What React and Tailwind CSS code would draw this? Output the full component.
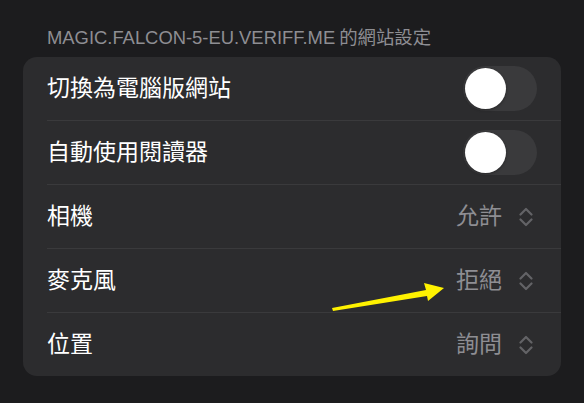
import React from "react";

const font = {
  fontFamily: '"Liberation Sans", "Noto Sans CJK TC", sans-serif',
};

const Toggle = () => (
  <div className="w-[74px] h-[45px] rounded-full bg-[#3a3a3c] p-[2px] flex items-center">
    <div className="w-[41px] h-[41px] rounded-full bg-white shadow-[0_1px_3px_rgba(0,0,0,0.35)]" />
  </div>
);

const Chevrons = () => (
  <svg width="14" height="22" viewBox="0 0 14 22" fill="none">
    <polyline points="1.5,8.5 7,3 12.5,8.5" stroke="#636366" strokeWidth="2.2" strokeLinecap="round" strokeLinejoin="round" />
    <polyline points="1.5,13.5 7,19 12.5,13.5" stroke="#636366" strokeWidth="2.2" strokeLinecap="round" strokeLinejoin="round" />
  </svg>
);

const rows = [
  { label: "切換為電腦版網站", toggle: true },
  { label: "自動使用閱讀器", toggle: true },
  { label: "相機", value: "允許" },
  { label: "麥克風", value: "拒絕" },
  { label: "位置", value: "詢問" },
];

export default function App() {
  return (
    <div className="relative w-[584px] h-[403px] bg-[#1c1c1e] overflow-hidden" style={font}>
      <div className="pl-[47px] pt-[27px] text-[18.4px] leading-[22px] text-[#8e8e93]">
        MAGIC.FALCON-5-EU.VERIFF.ME<span className="ml-[4px]">的網站設定</span>
      </div>
      <div className="mx-[23px] mt-[8px] bg-[#2c2c2e] rounded-[14px] overflow-hidden">
        {rows.map((row, i) => (
          <div key={row.label} className="pl-[24px]">
            <div
              className={`flex items-center justify-between ${
                i < rows.length - 1 ? "h-[64px] border-b border-[#3a3a3c]" : "h-[63px]"
              } ${row.toggle ? "pr-[24px]" : "pr-[28px]"}`}
            >
              <span className="text-[23px] text-white">{row.label}</span>
              {row.toggle ? (
                <Toggle />
              ) : (
                <div className="flex items-center gap-[17px]">
                  <span className="text-[23px] text-[#8e8e93]">{row.value}</span>
                  <Chevrons />
                </div>
              )}
            </div>
          </div>
        ))}
      </div>

      {/* yellow annotation arrow */}
      <svg className="absolute left-0 top-0 pointer-events-none" width="584" height="403" viewBox="0 0 584 403">
        <polygon
          points="332,308 426,290 424,283 444,288 428,301 427,296 333,311"
          fill="#fff200"
        />
      </svg>
    </div>
  );
}
